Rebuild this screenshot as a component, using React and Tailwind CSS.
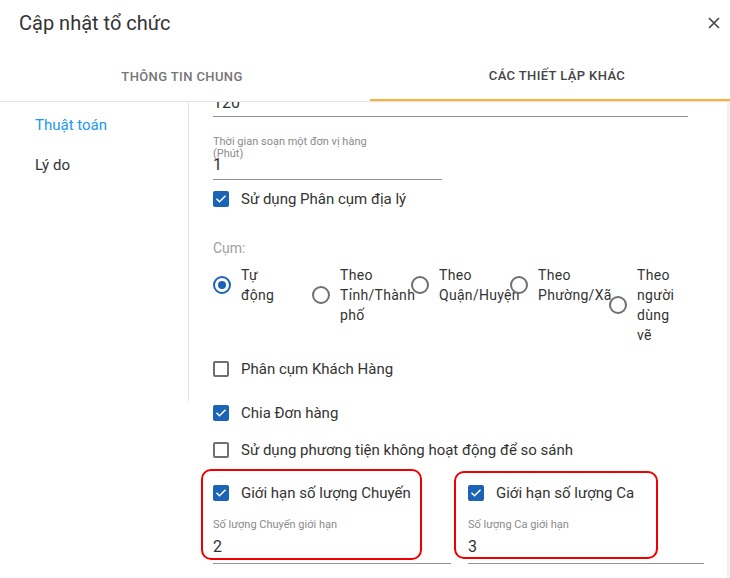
import React from "react";

const font = { fontFamily: "Roboto, 'Noto Sans', Arial, sans-serif" };

function Checkbox({ checked }) {
  if (checked) {
    return (
      <span className="w-[16px] h-[16px] shrink-0 rounded-[2px] bg-[#1b63b5] flex items-center justify-center">
        <svg width="12" height="12" viewBox="0 0 24 24" fill="none">
          <path d="M4 12.5l5 5L20 6.5" stroke="#fff" strokeWidth="3" strokeLinecap="square" />
        </svg>
      </span>
    );
  }
  return <span className="w-[16px] h-[16px] shrink-0 rounded-[2px] border-2 border-[#707070] bg-white" />;
}

function CheckRow({ checked, label, className = "" }) {
  return (
    <div className={"h-[24px] flex items-center gap-[12px] " + className}>
      <Checkbox checked={checked} />
      <span className="text-[15px] text-[#333] whitespace-nowrap">{label}</span>
    </div>
  );
}

function Radio({ checked, label }) {
  return (
    <div className="w-[99px] shrink-0 flex items-center gap-[10px]">
      <span
        className={
          "w-[18px] h-[18px] shrink-0 rounded-full border-2 flex items-center justify-center bg-white " +
          (checked ? "border-[#1b63b5]" : "border-[#707070]")
        }
      >
        {checked && <span className="w-[8px] h-[8px] rounded-full bg-[#1b63b5]" />}
      </span>
      <span className="w-[46px] shrink-0 text-[14px] leading-[20px] tracking-[0.3px] text-[#333]">{label}</span>
    </div>
  );
}

export default function App() {
  const clusters = [
    { label: "Tự động", checked: true },
    { label: "Theo Tỉnh/Thành phố" },
    { label: "Theo Quận/Huyện" },
    { label: "Theo Phường/Xã" },
    { label: "Theo người dùng vẽ" },
  ];

  return (
    <div className="w-[730px] h-[578px] overflow-hidden bg-white flex flex-col" style={font}>
      {/* Header */}
      <div className="h-[52px] shrink-0 flex items-start justify-between pl-[19px] pr-[9px] pt-[9px]">
        <h2 className="text-[20px] leading-[28px] font-normal text-[#333]">Cập nhật tổ chức</h2>
        <button className="w-[12px] h-[12px] mt-[8px] mr-[1px]">
          <svg width="12" height="12" viewBox="0 0 12 12">
            <path d="M1 1L11 11M11 1L1 11" stroke="#444" strokeWidth="1.6" />
          </svg>
        </button>
      </div>

      {/* Tabs */}
      <div className="h-[50px] shrink-0 flex border-b border-[#e3e3e3]">
        <div className="w-[370px] pr-[6px] flex items-center justify-center text-[13px] font-medium tracking-[0.03em] text-[#757575]">
          THÔNG TIN CHUNG
        </div>
        <div className="flex-1 pl-[14px] flex items-center justify-center text-[13px] font-medium tracking-[0.03em] text-[#444] border-b-2 border-[#f9b233]">
          CÁC THIẾT LẬP KHÁC
        </div>
      </div>

      {/* Body */}
      <div className="flex-1 flex min-h-0">
        <div className="w-[189px] h-[299px] shrink-0 border-r border-[#e3e3e3] pl-[35px] pt-[13px] flex flex-col gap-[20px] text-[15px] leading-[20px]">
          <span className="text-[#2196f3]">Thuật toán</span>
          <span className="text-[#333]">Lý do</span>
        </div>

        <div className="flex-1 min-w-0 overflow-hidden pl-[24px]">
          <div className="w-[475px] h-[15px] overflow-hidden border-b border-[#949494]">
            <div className="-mt-[9px] text-[16px] leading-[20px] text-[#333]">120</div>
          </div>

          <div className="w-[229px] mt-[19px] pb-[5px] border-b border-[#949494]">
            <div className="text-[11px] leading-[12px] text-[#8a8a8a]">
              <div>Thời gian soạn một đơn vị hàng</div>
              <div>(Phút)</div>
            </div>
            <div className="-mt-[5px] text-[16px] leading-[19px] text-[#333]">1</div>
          </div>

          <CheckRow checked label="Sử dụng Phân cụm địa lý" className="mt-[7px]" />

          <div className="mt-[27px] text-[14px] leading-[20px] text-[#9e9e9e]">Cụm:</div>

          <div className="mt-[7px] flex items-start">
            {clusters.map((c) => (
              <Radio key={c.label} label={c.label} checked={c.checked} />
            ))}
          </div>

          <CheckRow label="Phân cụm Khách Hàng" className="mt-[12px]" />
          <CheckRow checked label="Chia Đơn hàng" className="mt-[20px]" />
          <CheckRow label="Sử dụng phương tiện không hoạt động để so sánh" className="mt-[13px]" />

          <div className="relative mt-[19px] grid grid-cols-[238px_237px] gap-x-[16px]">
            <div>
              <CheckRow checked label="Giới hạn số lượng Chuyến" />
              <div className="mt-[14px] text-[11px] leading-[12px] text-[#8a8a8a]">Số lượng Chuyến giới hạn</div>
              <div className="mt-[6px] pb-[7px] border-b border-[#949494] text-[16px] leading-[19px] text-[#333]">2</div>
            </div>
            <div className="pl-[1px]">
              <CheckRow checked label="Giới hạn số lượng Ca" />
              <div className="mt-[14px] text-[11px] leading-[12px] text-[#8a8a8a]">Số lượng Ca giới hạn</div>
              <div className="mt-[6px] pb-[7px] border-b border-[#949494] text-[16px] leading-[19px] text-[#333]">3</div>
            </div>

            <div className="absolute -top-[12px] -left-[12px] w-[221px] h-[91px] rounded-[10px] border-[2.5px] border-[#ee0000] pointer-events-none" />
            <div className="absolute -top-[10px] left-[241px] w-[204px] h-[88px] rounded-[10px] border-[2.5px] border-[#ee0000] pointer-events-none" />
          </div>
        </div>

        <div className="w-[3px] shrink-0 bg-[#f1f1f1]" />
      </div>
    </div>
  );
}
